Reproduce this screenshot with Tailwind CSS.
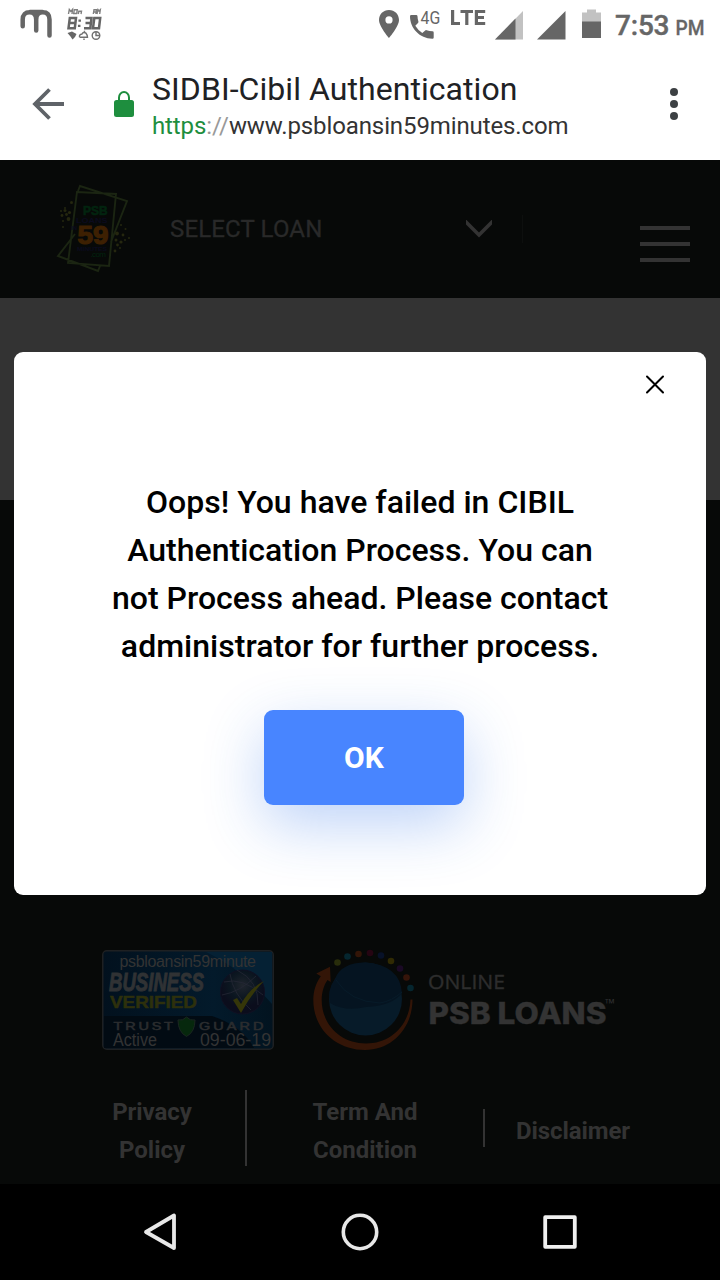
<!DOCTYPE html>
<html lang="en">
<head>
<meta charset="utf-8">
<meta name="viewport" content="width=device-width, initial-scale=1">
<title>SIDBI-Cibil Authentication</title>
<script src="https://cdn.jsdelivr.net/npm/@tailwindcss/browser@4"></script>
</head>
<body class="w-[720px] h-[1280px] overflow-hidden flex flex-col bg-black font-['Roboto',sans-serif]">

<!-- Status bar -->
<div class="h-12 shrink-0 bg-white">
<svg class="block" width="720" height="48" viewBox="0 0 720 48" font-family="Roboto, sans-serif" fill="#666">
  <path d="M22.700 26.300V19.500C22.700 14.500 25.500 12.200 29.500 12.200C33.500 12.200 36.200 14.500 36.200 19.500V30.500M36.200 19.500C36.200 14.500 39 12.200 42.800 12.200C46.800 12.200 49.500 14.500 49.500 19.500V35.500M30 12H42.500" fill="none" stroke="#666" stroke-width="4.500" stroke-linecap="round"/>
  <!-- Clock widget icon -->
  <g fill="none" stroke="#808080" stroke-width="1.400">
    <path d="M68.500 14L69.300 9.500L70.800 11.500L72.500 9.500L72 14M74.300 9.700H77.300L76.700 13.500H73.700ZM78.300 14L78.800 11.300H81.500L81 14M93.300 14L94 9.700H96.500L95.900 14M93.500 12H96M97 14L98 9.700L99 11L100.300 9.700L99.700 14"/>
    <g stroke="#666" stroke-width="2.500">
      <path d="M69.800 18H76L74.800 28.200H68.500ZM69 23H75M85.500 18H91.500L90.300 28.200H84M85.500 23H91M94.300 18H100.200L99 28.200H93Z"/>
      <path d="M79.700 19.500V21.700M79.200 24.800V27"/>
    </g>
    <path stroke="#707070" d="M79.500 37Q79 34.500 82 34Q83.500 31.500 86 33.200Q87.500 35 87.500 37.300H79.500M84.500 31.800V30.800M84 38.500V40"/>
    <circle cx="96" cy="35.500" r="3.800" stroke="#707070"/><path stroke="#707070" d="M96 32V35.500H99.500"/>
  </g>
  <path d="M67.500 33L72 31.500L76.500 34L75 37L72.500 39.500L70.500 36.500Z"/>
  <path fill-rule="evenodd" d="M389 10C383.300 10 379 14.300 379 20C379 26.500 389 38 389 38S399 26.500 399 20C399 14.300 394.700 10 389 10ZM389 16.300A3.600 3.600 0 1 1 389 23.500A3.600 3.600 0 1 1 389 16.300Z"/>
  <path d="M411.300 15H416.200Q417.400 15 417.500 16.200Q417.600 19.300 418.400 21.500Q418.600 22.300 418 23L415.300 25.700Q418 30.200 422.300 33L425.200 30.400Q425.800 29.900 426.600 30.200Q429.500 31.200 432.500 31.200Q433.700 31.300 433.700 32.400V37.500Q433.700 38.700 432.500 38.700C419.500 38.700 410 28 410 16.300Q410 15 411.300 15Z"/>
  <text transform="translate(420.500 24.200) scale(.88 1)" x="0" y="0" font-size="18">4G</text>
  <path d="M451 10H454.200V22H460V25H451ZM460.500 10H473V13H468.400V25H465.200V13H460.500ZM474.800 10H485.200V13H478V16H484V18.900H478V22H485.200V25H474.800Z"/>
  <path fill="#c2c2c2" d="M523 11V39.500H495Z"/><path d="M515.500 18.600V39.500H495Z"/>
  <path d="M565.500 11V39.500H537Z"/>
  <path fill="#c2c2c2" d="M582 12.500H587V9.500H596V12.500H601V22H582Z"/><path d="M582 21.500H601V38H582Z"/>
  <text x="615" y="35.200" font-size="28" font-weight="500" stroke="#666" stroke-width=".4" textLength="54.500">7:53</text>
  <text x="675.500" y="35.200" font-size="20" font-weight="500" stroke="#666" stroke-width=".3" textLength="29" lengthAdjust="spacingAndGlyphs">PM</text>
</svg>
</div>

<!-- Browser toolbar -->
<header class="h-28 shrink-0 bg-white flex items-center pl-8 pr-[42px]">
  <svg width="32" height="32" viewBox="0 0 32 32" fill="none" stroke="#5f6368" stroke-width="3.800"><path d="M32 16H3M17.500 1.500L3 16L17.500 30.500"/></svg>
  <svg class="ml-[50px]" width="20" height="28" viewBox="0 0 20 28"><rect y="10" width="20" height="17" rx="2.500" fill="#1e8e3e"/><path d="M5 11V7.500a5 5.500 0 0 1 10 0V11" fill="none" stroke="#1e8e3e" stroke-width="2"/></svg>
  <div class="ml-[18px] mt-[5px] flex flex-col whitespace-nowrap">
    <div class="text-[32px] leading-[38px] tracking-[0.06px] text-[#202124]">SIDBI-Cibil Authentication</div>
    <div class="text-[24px] leading-9 tracking-[-0.11px] text-[#333]"><span class="text-[#1e8e3e]">https</span><span class="text-[#999]">://</span>www.psbloansin59minutes.com</div>
  </div>
  <svg class="ml-auto" width="8" height="32" viewBox="0 0 8 32" fill="#3c4043"><circle cx="4" cy="4" r="4"/><circle cx="4" cy="16" r="4"/><circle cx="4" cy="28" r="4"/></svg>
</header>

<!-- Dimmed page -->
<main class="relative h-[1024px] shrink-0 bg-[#070908] flex flex-col text-[#333]">
  <div class="h-[138px] shrink-0 flex items-start">
    <svg class="ml-[50px] mt-5" width="85" height="95" viewBox="0 0 85 95" font-family="Liberation Sans, sans-serif" font-weight="700">
      <g fill="none" stroke="#1b2512" stroke-width="1.900">
        <path d="M28 11L30 6L77 21L61 62M25 54L8 76L48 91L50 86M27 12L66 14L59 86L18 83Z"/>
      </g>
      <g fill="#25270f"><circle cx="21.500" cy="22.500" r="1.500"/><circle cx="15" cy="28" r="1"/><circle cx="19.500" cy="32.500" r="1.600"/><circle cx="15" cy="30.500" r="1.500"/><circle cx="11" cy="31" r="1"/><circle cx="12" cy="35.500" r="1.400"/><circle cx="16.500" cy="34.500" r="1.400"/><circle cx="18.500" cy="39" r="1.900"/><circle cx="13" cy="41" r="1"/><circle cx="13" cy="47" r="1"/><circle cx="71" cy="45" r="1"/><circle cx="75.500" cy="49" r="1"/><circle cx="67" cy="53.500" r="1.900"/><circle cx="73" cy="55" r="1.400"/><circle cx="66" cy="60" r="1.500"/><circle cx="71" cy="62" r="1.600"/><circle cx="67.500" cy="65" r="1.400"/><circle cx="79" cy="58" r="1"/><circle cx="75" cy="60" r="1"/><circle cx="65" cy="71" r="1.400"/><circle cx="70" cy="68" r="1"/></g>
      <text x="33" y="34.500" font-size="12" fill="#02240f" stroke="#02240f" stroke-width=".6" textLength="24.500" lengthAdjust="spacingAndGlyphs">PSB</text>
      <text x="26" y="42.500" font-size="8" fill="#0b0b1e" textLength="31.500" lengthAdjust="spacingAndGlyphs">LOANS</text>
      <text x="21" y="49.500" font-size="6" fill="#0b0b1e">IN</text>
      <text x="27.500" y="64" font-size="25" fill="#3d2002" stroke="#3d2002" stroke-width="1.200" textLength="31" lengthAdjust="spacingAndGlyphs">59</text>
      <text x="27" y="71" font-size="6" fill="#0b0b1e" textLength="30" lengthAdjust="spacingAndGlyphs">MINUTES</text>
      <text x="40.500" y="77" font-size="8" font-weight="400" fill="#02240f" textLength="15.500">.com</text>
    </svg>
    <div class="ml-[35px] mt-[51px] text-[24px] leading-9 tracking-[0.15px] [-webkit-text-stroke:0.3px_#292929] text-[#292929] whitespace-nowrap w-[296px]">SELECT LOAN</div>
    <svg class="mt-[60px]" width="26" height="19" viewBox="0 0 26 19" fill="none" stroke="#333" stroke-width="3.600"><path d="M-1 1L13 15L27 1"/></svg>
    <div class="ml-[30px] mt-[55px] w-px h-7 bg-[#0d0f0e]"></div>
    <div class="ml-[117px] mt-[66px] flex flex-col gap-3">
      <div class="w-[50px] h-1 bg-[#333]"></div><div class="w-[50px] h-1 bg-[#333]"></div><div class="w-[50px] h-1 bg-[#333]"></div>
    </div>
  </div>
  <div class="h-[202px] shrink-0 bg-[#333]"></div>

  <footer class="mt-auto pb-[18px]">
    <div class="flex items-start pl-[102px]">
      <svg class="mt-1" width="172" height="100" viewBox="0 0 172 100" font-family="Liberation Sans, sans-serif">
        <defs><linearGradient id="badge"><stop stop-color="#02111e"/><stop offset=".65" stop-color="#031a2b"/><stop offset="1" stop-color="#02131f"/></linearGradient><radialGradient id="globe" cy=".35"><stop stop-color="#20252d"/><stop offset=".6" stop-color="#0b1620"/><stop offset="1" stop-color="#0b0d1c"/></radialGradient></defs>
        <rect x=".75" y=".75" width="170.500" height="98.500" rx="4" fill="url(#badge)" stroke="#1e2022" stroke-width="1.500"/>
        <path d="M2 66H110Q140 76 152 98H2Z" fill="#020b13"/><path d="M104 2Q137 17 170 54V2Z" fill="#052134"/>
        <text x="17.500" y="16.800" font-size="16" fill="#333" textLength="136.500">psbloansin59minute</text>
        <text x="7" y="40.500" font-size="25.500" font-weight="700" font-style="italic" fill="#303234" stroke="#303234" stroke-width="1" textLength="95" lengthAdjust="spacingAndGlyphs">BUSINESS</text>
        <text x="8" y="58" font-size="16.500" font-weight="700" fill="#2d300c" stroke="#2d300c" stroke-width=".5" textLength="87" lengthAdjust="spacingAndGlyphs">VERIFIED</text>
        <circle cx="140.500" cy="42" r="22" fill="url(#globe)" stroke="#101022" stroke-width="1"/>
        <g fill="none" stroke="#252735" stroke-width=".8"><path d="M120 45Q138 42 154 26M128 24Q131 44 149 60M135 20Q157 31 156 55M122 32Q140 27 161 45"/></g>
        <path d="M131 50L135 48L139 54Q148 38 162 31Q149 44 139 63Z" fill="#353609"/>
        <g font-size="10" font-weight="400" fill="#2b2d2f" stroke="#2b2d2f" stroke-width=".5"><text transform="translate(11.500 80) scale(1.450 1)" x="0" y="0" textLength="41">TRUST</text><text transform="translate(97 80) scale(1.450 1)" x="0" y="0" textLength="44.500">GUARD</text></g>
        <path d="M76 70Q81 71 84.500 67Q88 71 93 70Q93 82 84.500 86.500Q76 82 76 70Z" fill="#06280d" stroke="#1b2621" stroke-width="1"/>
        <g font-size="17.500" fill="#333"><text x="11" y="95.500" textLength="44" lengthAdjust="spacingAndGlyphs">Active</text><text x="98" y="95.500" textLength="71" lengthAdjust="spacingAndGlyphs">09-06-19</text></g>
      </svg>
      <svg class="ml-[38px]" width="308" height="108" viewBox="0 0 308 108">
        <circle cx="53.500" cy="53" r="36.500" fill="#071b29"/>
        <path d="M23 33Q29 16.500 53.500 16.500Q88 19 90 47Q80 60 54 61Q33 66 18 57Q15 44 23 33Z" fill="#051421"/>
        <path d="M24 34Q38 56 68 57Q80 55 90 46" fill="none" stroke="#071b29" stroke-width="1"/>
        <path d="M18 20.700L4.300 27.500L8.800 30.300C4 37 1.300 45 1.300 54C1.300 83 24 104 53 104C80 104 100.500 82 100.500 53.500H98.500C97.500 79 79 97.500 54 97.500C29 97.500 9.700 79 9.700 54C9.700 46 12 39 15.500 34L18.700 36Z" fill="#331507"/>
        <g><circle cx="25.500" cy="16.500" r="3.300" fill="#282d0b"/><circle cx="35.500" cy="10.500" r="3.300" fill="#05262f"/><circle cx="46.500" cy="8" r="3.300" fill="#331507"/><circle cx="58" cy="7" r="3.300" fill="#250512"/><circle cx="69" cy="9.500" r="3.300" fill="#071128"/><circle cx="79" cy="15" r="3.300" fill="#302a03"/><circle cx="88" cy="22.500" r="3.300" fill="#1a0925"/><circle cx="94.500" cy="31.500" r="3.300" fill="#351409"/><circle cx="98.500" cy="42" r="3.300" fill="#05262f"/></g>
        <text x="116" y="42.500" font-family="Open Sans, sans-serif" font-size="20.500" fill="#2d2d2d" stroke="#2d2d2d" stroke-width=".4" textLength="77" lengthAdjust="spacingAndGlyphs">ONLINE</text>
        <text x="116.500" y="78" font-family="Inter, sans-serif" font-size="30" font-weight="800" fill="#333" stroke="#333" stroke-width=".4" textLength="178" lengthAdjust="spacingAndGlyphs">PSB LOANS</text>
        <text x="293" y="62" font-family="Open Sans, sans-serif" font-size="13" fill="#303030">™</text>
      </svg>
    </div>
    <nav class="mt-9 flex items-center text-[24px] leading-[38px] font-bold text-center whitespace-nowrap">
      <div class="ml-[60px] w-[187px] h-[76px] border-r-2 border-[#333]"><div class="w-[184px] pt-[3px] tracking-[-0.05px]">Privacy<br>Policy</div></div>
      <div class="w-[236px] h-[76px] pt-[3px]">Term And<br>Condition</div>
      <div class="border-l-2 border-[#333] h-[38px] w-[178px] pt-[3px] tracking-[-0.1px]">Disclaimer</div>
    </nav>
  </footer>

  <!-- Failure dialog -->
  <section role="dialog" aria-modal="true" class="absolute left-[14px] top-48 w-[692px] h-[543px] rounded-[9px] bg-white text-black overflow-hidden flex flex-col items-center">
    <button aria-label="Close" class="self-end mt-[22px] mr-[41px]"><svg class="block" width="20" height="20" viewBox="0 0 20 20" stroke="#000" stroke-width="2" stroke-linecap="round"><path d="M2 2.500L18 18.500M18 2.500L2 18.500"/></svg></button>
    <p class="mt-[84px] text-[32px] leading-[48px] tracking-[0.02px] font-medium text-center whitespace-nowrap">Oops! You have failed in CIBIL<br>Authentication Process. You can<br>not Process ahead. Please contact<br>administrator for further process.</p>
    <button class="mt-10 ml-2 w-[200px] h-[95px] shrink-0 rounded-[9px] bg-[#4885ff] text-white text-[30px] font-bold shadow-[0_20px_60px_rgba(41,108,232,0.3)]">OK</button>
  </section>
</main>

<!-- Android navigation -->
<div class="h-24 shrink-0 bg-black grid grid-cols-[320px_80px_320px] place-items-center">
  <svg width="40" height="40" viewBox="0 0 40 40" fill="none" stroke="#e8e8e8" stroke-width="3.800" stroke-linejoin="round"><path d="M34 3.500V36L6 20Z"/></svg>
  <svg width="40" height="40" viewBox="0 0 40 40" fill="none" stroke="#e8e8e8" stroke-width="3.600"><circle cx="20" cy="20" r="16.700"/></svg>
  <svg width="40" height="40" viewBox="0 0 40 40" fill="none" stroke="#f0f0f0" stroke-width="3.800" stroke-linejoin="round"><rect x="5.200" y="5.200" width="29.600" height="29.600"/></svg>
</div>
</body>
</html>
